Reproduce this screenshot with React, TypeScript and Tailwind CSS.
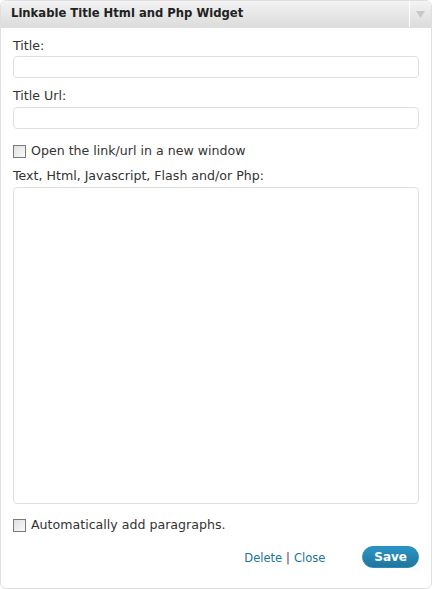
import React from "react";

export default function App() {
  const font = { fontFamily: '"DejaVu Sans", Verdana, sans-serif' };
  return (
    <div className="w-[432px] h-[589px] bg-white" style={font}>
      <div className="w-[432px] h-[589px] border border-[#dfdfdf] rounded-[6px] flex flex-col overflow-hidden">
        <div className="h-[27px] flex items-stretch bg-gradient-to-b from-[#f3f3f3] to-[#dcdcdc] border-b border-[#dfdfdf]">
          <div className="flex-1 flex items-center pl-[10px] text-[11.6px] font-bold text-[#222] leading-none">
            Linkable Title Html and Php Widget
          </div>
          <div className="w-[22px] flex items-center justify-center border-l border-white">
            <svg width="9" height="7" viewBox="0 0 9 7">
              <path d="M0 0 H9 L4.5 7 Z" fill="#c8c8c8" />
            </svg>
          </div>
        </div>
        <div className="flex-1 flex flex-col px-[12px] text-[12.6px] text-[#333]">
          <label className="mt-[10px] leading-[16px]">Title:</label>
          <div className="mt-[2px] h-[22px] border border-[#dfdfdf] rounded-[4px]" />
          <label className="mt-[10px] leading-[16px]">Title Url:</label>
          <div className="mt-[3px] h-[22px] border border-[#dfdfdf] rounded-[4px]" />
          <div className="mt-[14px] flex items-center gap-[5px] h-[16px]">
            <span className="w-[13px] h-[13px] border border-[#7a7a7a] bg-gradient-to-br from-[#e0e0e0] to-[#fafafa]" />
            <span className="leading-[16px]">Open the link/url in a new window</span>
          </div>
          <label className="mt-[9px] leading-[16px]">Text, Html, Javascript, Flash and/or Php:</label>
          <div className="mt-[3px] h-[317px] border border-[#dfdfdf] rounded-[4px]" />
          <div className="mt-[13px] flex items-center gap-[5px] h-[16px]">
            <span className="w-[13px] h-[13px] border border-[#7a7a7a] bg-gradient-to-br from-[#e0e0e0] to-[#fafafa]" />
            <span className="leading-[16px]">Automatically add paragraphs.</span>
          </div>
          <div className="mt-[13px] flex items-center justify-end">
            <div className="text-[11.5px] text-[#21759b] mt-[3px] mr-[37px]">
              <span>Delete</span>
              <span className="text-[#6a2a6a] mx-[4px]">|</span>
              <span>Close</span>
            </div>
            <div className="h-[22px] px-[11px] rounded-full bg-gradient-to-b from-[#2a95c5] to-[#21759b] border border-[#298cba] text-white font-bold text-[12px] flex items-center">
              Save
            </div>
          </div>
        </div>
      </div>
    </div>
  );
}
